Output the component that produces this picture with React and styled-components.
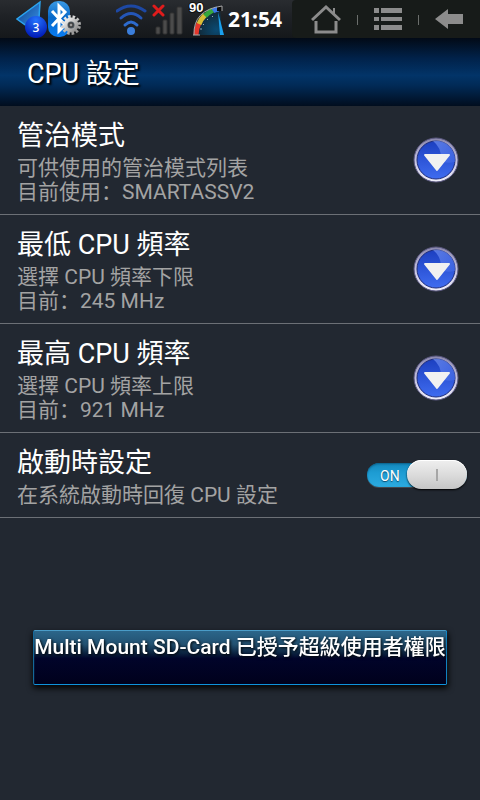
import React, { useState } from 'react';
import styled, { createGlobalStyle } from 'styled-components';

const GlobalStyle = createGlobalStyle`
  * {
    box-sizing: border-box;
  }

  body {
    margin: 0;
    background: #222831;
    color: #fff;
    font-family: Roboto, 'Noto Sans CJK SC', sans-serif;
  }
`;

const Screen = styled.div`
  min-height: 100vh;
  background: #222831;
`;

const StatusBar = styled.div`
  display: flex;
  height: 38px;
  background: linear-gradient(#292c30, #1d2024 50%, #15181b);
`;

const Notifications = styled.div`
  flex: 1;
  display: flex;
  align-items: center;
  padding-left: 16px;
`;

const SystemIcons = styled.div`
  display: flex;
  align-items: center;
  gap: 4px;
  padding-right: 10px;
`;

const Clock = styled.time`
  width: 54px;
  font-family: 'Noto Sans', sans-serif;
  font-size: 21px;
  line-height: 38px;
  font-weight: 700;
`;

const NavKeys = styled.nav`
  display: flex;
  width: 188px;
  padding-left: 3px;
  border-radius: 4px 0 0 4px;
  background: #171b19;
`;

const NavKey = styled.button`
  position: relative;
  flex: 1;
  display: flex;
  align-items: center;
  justify-content: center;
  padding: 0;
  border: 0;
  background: none;
  color: #8c8c8c;

  & + &:before {
    content: '';
    position: absolute;
    left: 0;
    top: 15px;
    width: 1px;
    height: 10px;
    background: #6b6e6c;
  }
`;

const Header = styled.header`
  display: flex;
  align-items: center;
  height: 68px;
  padding: 4px 27px 0;
  background: linear-gradient(#020a16, #01224a 30%, #023468 55%, #012a56 70%, #010d1e);
`;

const HeaderTitle = styled.h1`
  margin: 0;
  font-size: 27px;
  line-height: 36px;
  font-weight: 400;
  text-shadow: 2px 2px 2px #000;
`;

const Row = styled.section`
  display: flex;
  align-items: center;
  justify-content: space-between;
  padding: 10px ${props => (props.$wide ? '13px' : '21px')} 10px 17px;
  border-bottom: 1px solid #6c7076;
`;

const RowTitle = styled.h2`
  margin: 0;
  font-size: 27px;
  line-height: 40px;
  font-weight: 400;
`;

const RowText = styled.p`
  margin: 0;
  font-size: 21px;
  line-height: 24px;
  color: #a3a3a3;
`;

const PickerButton = styled.button`
  flex: none;
  display: flex;
  width: 46px;
  height: 46px;
  padding: 0;
  border: 0;
  border-radius: 50%;
  background: none;
`;

const Switch = styled.label`
  position: relative;
  flex: none;
  display: flex;
  align-items: center;
  width: 100px;
  height: 30px;
`;

const SwitchInput = styled.input`
  position: absolute;
  inset: 0;
  width: 100%;
  height: 100%;
  margin: 0;
  opacity: 0;
`;

const SwitchTrack = styled.span`
  flex: 1;
  height: 24px;
  padding: 0 13px;
  border-radius: 12px;
  background: ${props => (props.$on ? 'linear-gradient(#1487bb, #1d9cd3 40%, #2cabe0)' : '#4a4f57')};
  box-shadow: inset 0 1px 2px #0c5f88, 0 1px 0 #43484f;
  font-size: 14px;
  line-height: 26px;
  text-align: ${props => (props.$on ? 'left' : 'right')};
  text-shadow: 0 1px 1px #0b4c6c;
`;

const SwitchThumb = styled.span`
  position: absolute;
  top: 0;
  ${props => (props.$on ? 'right: 0;' : 'left: 0;')}
  display: flex;
  align-items: center;
  justify-content: center;
  width: 60px;
  height: 29px;
  border-radius: 15px;
  background: linear-gradient(#efefef, #dcdcdc 50%, #c6c6c6);
  box-shadow: inset 0 1px 0 #fff, 0 1px 2px #000;
  pointer-events: none;

  &:before {
    content: '';
    width: 2px;
    height: 12px;
    background: #a6a6a6;
  }
`;

const Toast = styled.div`
  position: fixed;
  left: 50%;
  bottom: 115px;
  transform: translateX(-50%);
  height: 55px;
  padding-top: 4px;
  border: 1px solid #0f93dc;
  border-top-color: #4a9cc8;
  border-radius: 2px;
  background: linear-gradient(#2b668a, #235272 25%, #0b2340 42%, #01042a 52%, #00011c);
  box-shadow: 0 3px 6px #000;
  font-size: 21px;
  line-height: 24px;
  font-weight: 500;
  white-space: nowrap;
  text-shadow: 1px 1px 3px #000;
`;

const ArrowBadgeIcon = () => (
  <svg width="32" height="38" viewBox="0 0 32 38">
    <defs>
      <linearGradient id="arrow" x1="0" y1="0" x2="1" y2="1">
        <stop offset="0" stopColor="#0b3f8c" />
        <stop offset="1" stopColor="#3f9cf0" />
      </linearGradient>
      <radialGradient id="badge" cx="0.5" cy="0.2" r="0.8">
        <stop offset="0" stopColor="#2474ff" />
        <stop offset="1" stopColor="#0018b4" />
      </radialGradient>
    </defs>
    <path d="M24 2 L1 19 L22 34 Z" fill="url(#arrow)" stroke="#2ba4ef" strokeWidth="1.5" />
    <circle cx="20" cy="27" r="11" fill="url(#badge)" />
    <text x="20" y="32" fontSize="12" fontFamily="Noto Sans" fontWeight="500" textAnchor="middle" fill="#fff">3</text>
  </svg>
);

const BluetoothIcon = () => (
  <svg width="34" height="38" viewBox="0 0 34 38">
    <defs>
      <linearGradient id="bt" x1="0" y1="0" x2="0" y2="1">
        <stop offset="0" stopColor="#3b9be6" />
        <stop offset="0.45" stopColor="#0868c8" />
        <stop offset="1" stopColor="#087cf2" />
      </linearGradient>
      <linearGradient id="gear" x1="0" y1="0" x2="1" y2="1">
        <stop offset="0" stopColor="#f2f2f2" />
        <stop offset="1" stopColor="#8b8b8b" />
      </linearGradient>
    </defs>
    <rect x="0" y="1" width="22" height="36" rx="10" fill="url(#bt)" />
    <path d="M4 11 L17 25 L11 31 V6 L17 12 L4 26" fill="none" stroke="#fff" strokeWidth="3" />
    <circle cx="23" cy="25" r="8" fill="none" stroke="url(#gear)" strokeWidth="4" strokeDasharray="2.4 1.8" transform="rotate(8 23 25)" />
    <circle cx="23" cy="25" r="5.5" fill="#4d565e" stroke="url(#gear)" strokeWidth="4" />
    <circle cx="23" cy="25" r="2" fill="#9b9b9b" stroke="#333" strokeWidth="1" />
  </svg>
);

const WifiIcon = () => (
  <svg width="32" height="38" viewBox="0 0 32 38" fill="none" strokeLinecap="round">
    <path d="M1 11 Q15 1 29 11" stroke="#1d48a4" strokeWidth="3" />
    <path d="M5 18 Q15 9 25 18" stroke="#2456b8" strokeWidth="3" />
    <path d="M9 25 Q15 19 21 25" stroke="#2d6bce" strokeWidth="3" />
    <circle cx="15" cy="31" r="4" fill="#3b7edb" />
  </svg>
);

const SignalIcon = () => (
  <svg width="32" height="38" viewBox="0 0 32 38">
    <g fill="#4b4b4b" stroke="#333" strokeWidth="1">
      <rect x="4" y="27" width="4" height="7" rx="1" />
      <rect x="11" y="20" width="4" height="14" rx="1" />
      <rect x="18" y="13" width="4" height="21" rx="1" />
      <rect x="25" y="7" width="5" height="27" rx="1" />
    </g>
    <path d="M2 6 L11 15 M11 6 L2 15" stroke="#e01c1c" strokeWidth="3" strokeLinecap="round" />
  </svg>
);

const GaugeIcon = () => (
  <svg width="36" height="38" viewBox="0 0 36 38">
    <defs>
      <radialGradient id="dial" cx="0.8" cy="0.8" r="0.8">
        <stop offset="0" stopColor="#0a4a72" />
        <stop offset="1" stopColor="#12232d" />
      </radialGradient>
    </defs>
    <path d="M6 35 A26 27 0 0 1 32 8 L34 35 Z" fill="url(#dial)" />
    <g fill="none" strokeWidth="5">
      <path d="M8 35 Q8 29 11 23" stroke="#e5372c" />
      <path d="M11 24 Q13 19 17 15" stroke="#d8bd36" />
      <path d="M17 16 Q21 12 25 10" stroke="#36a63c" />
      <path d="M25 11 Q28 9 31 9" stroke="#3c78ea" />
    </g>
    <path d="M29 6 H34 V11 H29 Z" fill="#0b0b0b" />
    <path d="M6 35 Q5 10 34 6 V11 M5 35 H12" fill="none" stroke="#aaa" strokeWidth="1" />
    <path d="M12 29 H14 M15 24 L16 25 M19 19 L20 20 M24 16 L25 17" stroke="#9ab" strokeWidth="1" />
    <path d="M30 12 L32 35 H36 Z" fill="#1ba0ec" />
    <text x="1" y="12" fontSize="13" fontFamily="Liberation Sans" fontWeight="700" fill="#fff" stroke="#111" strokeWidth="2" paintOrder="stroke">90</text>
  </svg>
);

const HomeIcon = () => (
  <svg width="30" height="30" viewBox="0 0 30 30" fill="none" stroke="currentColor" strokeWidth="3">
    <path d="M1 16 L15 3 L29 16" />
    <path d="M5 17 V28 H25 V17" />
    <path d="M23 10 V4" strokeWidth="2" />
  </svg>
);

const MenuIcon = () => (
  <svg width="30" height="22" viewBox="0 0 30 22" fill="currentColor">
    <path d="M1 0H6V5H1Z M8 0H29V5H8Z M1 9H6V13H1Z M8 9H29V13H8Z M1 17H6V22H1Z M8 17H29V22H8Z" />
  </svg>
);

const BackIcon = () => (
  <svg width="28" height="20" viewBox="0 0 28 20" fill="currentColor">
    <path d="M0 10 L13 0 V5 H28 V15 H13 V20 Z" />
  </svg>
);

const DownIcon = () => (
  <svg width="46" height="46" viewBox="0 0 46 46">
    <defs>
      <linearGradient id="ring" x1="0" y1="0" x2="0" y2="1">
        <stop offset="0" stopColor="#8a87ac" />
        <stop offset="0.5" stopColor="#c3c0de" />
        <stop offset="1" stopColor="#f0effa" />
      </linearGradient>
      <linearGradient id="ball" x1="0" y1="0" x2="0" y2="1">
        <stop offset="0" stopColor="#1c3fc0" />
        <stop offset="1" stopColor="#3f6cf0" />
      </linearGradient>
      <linearGradient id="shine" x1="0" y1="0" x2="1" y2="1">
        <stop offset="0" stopColor="#7594f2" />
        <stop offset="1" stopColor="#3f66e6" />
      </linearGradient>
    </defs>
    <circle cx="23" cy="23" r="22" fill="url(#ring)" stroke="#5a5880" strokeWidth="1" />
    <circle cx="23" cy="23" r="19" fill="url(#ball)" stroke="#1d2c7c" strokeWidth="1" />
    <path d="M20 4 Q29 11 28 24 Q34 27 42 25 A19 19 0 0 0 20 4 Z" fill="url(#shine)" opacity="0.7" />
    <path d="M12 18 H36 L24 33 Z" fill="#f1f1f1" stroke="#f1f1f1" strokeWidth="2" strokeLinejoin="round" />
  </svg>
);

const settings = [
  { title: '管治模式', lines: ['可供使用的管治模式列表', '目前使用：SMARTASSV2'] },
  { title: '最低 CPU 頻率', lines: ['選擇 CPU 頻率下限', '目前：245 MHz'] },
  { title: '最高 CPU 頻率', lines: ['選擇 CPU 頻率上限', '目前：921 MHz'] },
];

const App = () => {
  const [onBoot, setOnBoot] = useState(true);

  return (
    <Screen lang="zh-Hans">
      <GlobalStyle />
      <StatusBar>
        <Notifications>
          <ArrowBadgeIcon />
          <BluetoothIcon />
        </Notifications>
        <SystemIcons>
          <WifiIcon />
          <SignalIcon />
          <GaugeIcon />
          <Clock>21:54</Clock>
        </SystemIcons>
        <NavKeys>
          <NavKey aria-label="Home"><HomeIcon /></NavKey>
          <NavKey aria-label="Menu"><MenuIcon /></NavKey>
          <NavKey aria-label="Back"><BackIcon /></NavKey>
        </NavKeys>
      </StatusBar>
      <Header>
        <HeaderTitle>CPU 設定</HeaderTitle>
      </Header>
      <main>
        {settings.map(({ title, lines }) => (
          <Row key={title}>
            <div>
              <RowTitle>{title}</RowTitle>
              {lines.map(line => <RowText key={line}>{line}</RowText>)}
            </div>
            <PickerButton aria-label={title}><DownIcon /></PickerButton>
          </Row>
        ))}
        <Row $wide>
          <div>
            <RowTitle id="boot-title">啟動時設定</RowTitle>
            <RowText>在系統啟動時回復 CPU 設定</RowText>
          </div>
          <Switch>
            <SwitchTrack $on={onBoot}>{onBoot ? 'ON' : 'OFF'}</SwitchTrack>
            <SwitchThumb $on={onBoot} />
            <SwitchInput
              type="checkbox"
              role="switch"
              aria-labelledby="boot-title"
              checked={onBoot}
              onChange={e => setOnBoot(e.target.checked)}
            />
          </Switch>
        </Row>
      </main>
      <Toast role="status">Multi Mount SD-Card 已授予超級使用者權限</Toast>
    </Screen>
  );
};

export default App;
